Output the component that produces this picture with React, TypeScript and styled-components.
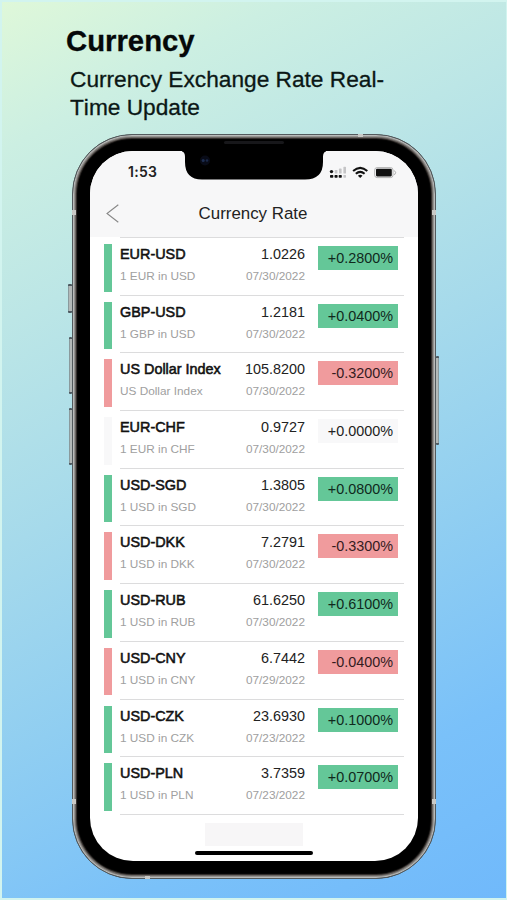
import React from 'react';
import styled, { createGlobalStyle } from 'styled-components';

const GlobalStyle = createGlobalStyle`
  * { box-sizing: border-box; }
  html, body { margin: 0; padding: 0; }
  body { font-family: "Liberation Sans", Arial, sans-serif; color: #111; }
  h1, h2, p { margin: 0; font-weight: 400; }
`;

type Trend = 'up' | 'down' | 'flat';
const trendColor: Record<Trend, string> = { up: '#64c798', down: '#f09b9d', flat: '#f8f8f9' };
const trendInk: Record<Trend, string> = { up: '#10291d', down: '#351c1f', flat: '#222' };

const Page = styled.main`
  width: 507px;
  height: 900px;
  overflow: hidden;
  padding: 22px 0 0 70px;
  border: solid #d2f4ef;
  border-width: 2px 1px 2px 2px;
  background: linear-gradient(152deg, #dff8d9 0%, #ccefe2 13%, #bce6e6 28%, #a6daeb 47%, #90cef1 65%, #7ac1f9 83%, #70b9fb 100%) border-box;
  background-clip: padding-box;
`;
const Headline = styled.h1`
  margin-left: -6px;
  font-size: 29.3px;
  line-height: 34px;
  font-weight: 700;
  color: #050808;
  -webkit-text-stroke: 0.3px #050808;
`;
const Tagline = styled.p`
  width: 340px;
  margin: 8px 0 0 -2px;
  font-size: 22.7px;
  line-height: 27.5px;
  font-kerning: none;
  color: #0b1715;
  -webkit-text-stroke: 0.3px #0b1715;
`;
const Phone = styled.section`
  position: relative;
  width: 364px;
  height: 745px;
  margin-top: 13px;
  padding: 16px 18px;
  border-radius: 60px;
  background: #000;
  border: 1px solid #535a5d;
  box-shadow: inset 0 0 0 1px #b9bbba, inset 0 0 0 2px #94928f, inset 0 0 0 3px #6b6764, inset 0 0 1px 4px #3a3532;
`;
const SideButton = styled.span<{ $side: 'left' | 'right'; $top: number; $height: number; $wide?: boolean }>`
  position: absolute;
  ${p => p.$side}: ${p => (p.$wide ? -5 : -4)}px;
  top: ${p => p.$top}px;
  width: ${p => (p.$wide ? 4 : 3)}px;
  height: ${p => p.$height}px;
  border: solid #4e5a61;
  border-width: 2px 0;
  border-radius: 1px;
  background: #b3b9b8;
  box-shadow: inset ${p => (p.$side === 'left' ? 1 : -1)}px 0 #8a9a9d;
`;
const AntennaBand = styled.i<{ $x: number; $y: number; $flat?: boolean }>`
  position: absolute;
  left: ${p => p.$x}px;
  top: ${p => p.$y}px;
  width: ${p => (p.$flat ? 5 : 4)}px;
  height: ${p => (p.$flat ? 3 : 5)}px;
  background: #c9c9c6;
`;
const Speaker = styled.i`
  position: absolute;
  left: 151px;
  top: 6px;
  width: 60px;
  height: 3px;
  border-radius: 2px;
  background: #17171a;
`;
const Screen = styled.div`
  position: relative;
  width: 328px;
  height: 710px;
  margin-left: -1px;
  overflow: hidden;
  display: flex;
  flex-direction: column;
  border-radius: 43px;
  background: #fff;
`;
const Notch = styled.svg`
  position: absolute;
  left: 92px;
  top: -9px;
`;
const TopBar = styled.header`
  height: 86px;
  background: #f7f7f8;
`;
const StatusBar = styled.div`
  height: 40px;
  padding: 1px 21px 0 38px;
  display: flex;
  align-items: center;
  justify-content: space-between;
`;
const Clock = styled.span`
  font: 600 14px/18px Inter, sans-serif;
  letter-spacing: 0.3px;
  color: #222;
`;
const StatusIcons = styled.svg`
  display: block;
`;
const NavBar = styled.div`
  height: 44px;
  display: grid;
  grid-template-columns: 37px 1fr 39px;
  align-items: center;
  padding-top: 1px;
`;
const BackIcon = styled.svg`
  display: block;
  margin-left: 16px;
`;
const Title = styled.h2`
  text-align: center;
  font-size: 16.9px;
  color: #222;
`;
const RateList = styled.div`
  margin: 0 14px;
  display: flex;
  flex-direction: column;
`;
const Row = styled.div`
  height: 57.7px;
  display: grid;
  grid-template-columns: 8px 1fr;
  column-gap: 8px;
`;
const TrendBar = styled.span<{ $trend: Trend }>`
  height: 47.5px;
  margin-top: 7px;
  background: ${p => trendColor[p.$trend]};
`;
const RowBody = styled.div`
  display: grid;
  grid-template-columns: 1fr 68px 80px;
  column-gap: 0;
  border-top: 1px solid #dcdcdd;
  padding-right: 6px;
`;
const Cell = styled.div<{ $align?: 'right' }>`
  display: flex;
  flex-direction: column;
  padding-top: 7px;
  padding-right: ${p => (p.$align ? 13 : 0)}px;
  align-items: ${p => (p.$align ? 'flex-end' : 'flex-start')};
  white-space: nowrap;
`;
const Pair = styled.span`
  font-size: 14.4px;
  line-height: 18px;
  color: #111;
  -webkit-text-stroke: 0.55px #111;
`;
const Rate = styled.span`
  font-size: 14.4px;
  line-height: 18px;
  color: #222;
`;
const Detail = styled.span`
  margin-top: 6px;
  font-size: 11.8px;
  line-height: 15px;
  color: #a0a0a0;
`;
const Change = styled.span<{ $trend: Trend }>`
  height: 24px;
  margin-top: 8px;
  padding-right: 5px;
  font-size: 14.4px;
  line-height: 24px;
  text-align: right;
  color: ${p => trendInk[p.$trend]};
  background: ${p => trendColor[p.$trend]};
`;
const ListEnd = styled.div`
  height: 1px;
  margin-left: 16px;
  background: #dcdcdd;
`;
const Footer = styled.footer`
  display: flex;
  flex-direction: column;
  align-items: center;
  padding-top: 8px;
`;
const Placeholder = styled.div`
  width: 98px;
  height: 23px;
  background: #f7f6f7;
`;
const HomeIndicator = styled.div`
  width: 118px;
  height: 4px;
  margin-top: 5px;
  border-radius: 2px;
  background: #000;
`;

const rates: { pair: string; detail: string; rate: string; date: string; change: string; trend: Trend }[] = [
  { pair: 'EUR-USD', detail: '1 EUR in USD', rate: '1.0226', date: '07/30/2022', change: '+0.2800%', trend: 'up' },
  { pair: 'GBP-USD', detail: '1 GBP in USD', rate: '1.2181', date: '07/30/2022', change: '+0.0400%', trend: 'up' },
  { pair: 'US Dollar Index', detail: 'US Dollar Index', rate: '105.8200', date: '07/30/2022', change: '-0.3200%', trend: 'down' },
  { pair: 'EUR-CHF', detail: '1 EUR in CHF', rate: '0.9727', date: '07/30/2022', change: '+0.0000%', trend: 'flat' },
  { pair: 'USD-SGD', detail: '1 USD in SGD', rate: '1.3805', date: '07/30/2022', change: '+0.0800%', trend: 'up' },
  { pair: 'USD-DKK', detail: '1 USD in DKK', rate: '7.2791', date: '07/30/2022', change: '-0.3300%', trend: 'down' },
  { pair: 'USD-RUB', detail: '1 USD in RUB', rate: '61.6250', date: '07/30/2022', change: '+0.6100%', trend: 'up' },
  { pair: 'USD-CNY', detail: '1 USD in CNY', rate: '6.7442', date: '07/29/2022', change: '-0.0400%', trend: 'down' },
  { pair: 'USD-CZK', detail: '1 USD in CZK', rate: '23.6930', date: '07/23/2022', change: '+0.1000%', trend: 'up' },
  { pair: 'USD-PLN', detail: '1 USD in PLN', rate: '3.7359', date: '07/23/2022', change: '+0.0700%', trend: 'up' },
];

function PhoneNotch() {
  return (
    <Notch width="144" height="40" viewBox="0 0 144 40">
      <path d="M0 0H144V9.5Q141 10 141 15V20Q141 37.5 123 37.5H20Q3 37.5 3 20V15Q3 10 0 9.5Z" fill="#000" />
      <circle cx="23" cy="18.5" r="5" fill="#080b17" />
      <circle cx="21.2" cy="18.5" r="1.5" fill="#1d2e51" />
      <circle cx="25" cy="18.5" r="1.3" fill="#192747" />
    </Notch>
  );
}

function DeviceStatus() {
  return (
    <StatusIcons width="68" height="16" viewBox="0 0 68 16">
      <g fill="#111">
        <circle cx="2.5" cy="7.6" r="1.7" />
        <rect x="1" y="11" width="3.3" height="2.7" rx=".7" />
        <rect x="5.5" y="11" width="3.1" height="2.7" rx=".7" />
        <rect x="9.7" y="11" width="3.1" height="2.7" rx=".7" />
      </g>
      <g fill="#c5c5c7">
        <rect x="5.8" y="6" width="2.6" height="3.5" rx=".6" />
        <rect x="10" y="4.6" width="2.6" height="5" rx=".6" />
        <rect x="14.4" y="2.8" width="2.6" height="6.8" rx=".6" />
        <rect x="14.4" y="11" width="2.6" height="2.7" rx=".6" />
      </g>
      <g fill="none" stroke="#111" strokeWidth="2">
        <path d="M24.1 7.1Q31.2.6 38.3 7.1" />
        <path d="M26.8 9.8Q31.2 6 35.6 9.8" />
      </g>
      <path d="M28.9 11.7Q31.2 9.9 33.5 11.7L31.2 14Z" fill="#111" />
      <rect x="45.7" y="3.6" width="18.3" height="10" rx="2.4" fill="#f7f7f8" stroke="#aaa" strokeWidth=".9" />
      <rect x="47" y="4.8" width="15.8" height="7.6" rx="1.1" fill="#111" />
      <path d="M65.4 6.5Q68 8.7 65.4 10.9" fill="none" stroke="#aaa" strokeWidth="1" />
    </StatusIcons>
  );
}

export default function App() {
  return (
    <>
      <GlobalStyle />
      <Page>
        <Headline>Currency</Headline>
        <Tagline>Currency Exchange Rate Real-<br />Time Update</Tagline>
        <Phone>
          <SideButton $side="left" $top={149} $height={29} $wide />
          <SideButton $side="left" $top={202} $height={57} />
          <SideButton $side="left" $top={273} $height={57} />
          <SideButton $side="right" $top={221} $height={89} />
          <AntennaBand $x={-1} $y={75} />
          <AntennaBand $x={359} $y={75} />
          <AntennaBand $x={-1} $y={664} />
          <AntennaBand $x={359} $y={664} />
          <AntennaBand $x={285} $y={-1} $flat />
          <AntennaBand $x={72} $y={741} $flat />
          <Speaker />
          <Screen>
            <TopBar>
              <StatusBar>
                <Clock>1:53</Clock>
                <DeviceStatus />
              </StatusBar>
              <NavBar>
                <BackIcon width="13" height="19" viewBox="0 0 13 19">
                  <path d="M12.3.7L1 9.5L12.3 18.3" fill="none" stroke="#888" strokeWidth="1.1" />
                </BackIcon>
                <Title>Currency Rate</Title>
              </NavBar>
            </TopBar>
            <RateList>
              {rates.map(item => (
                <Row key={item.pair}>
                  <TrendBar $trend={item.trend} />
                  <RowBody>
                    <Cell>
                      <Pair>{item.pair}</Pair>
                      <Detail>{item.detail}</Detail>
                    </Cell>
                    <Cell $align="right">
                      <Rate>{item.rate}</Rate>
                      <Detail>{item.date}</Detail>
                    </Cell>
                    <Change $trend={item.trend}>{item.change}</Change>
                  </RowBody>
                </Row>
              ))}
              <ListEnd />
            </RateList>
            <Footer>
              <Placeholder />
              <HomeIndicator />
            </Footer>
            <PhoneNotch />
          </Screen>
        </Phone>
      </Page>
    </>
  );
}
